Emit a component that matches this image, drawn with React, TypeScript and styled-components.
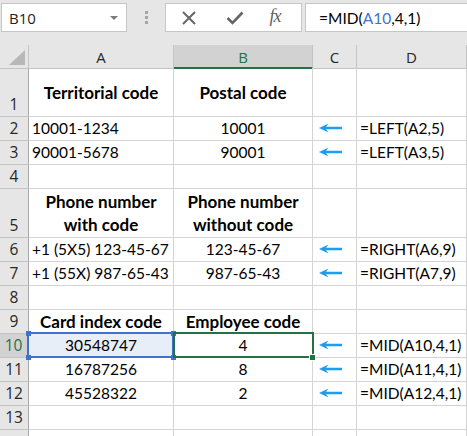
import React from 'react';
import styled, { createGlobalStyle, css } from 'styled-components';

const GlobalStyle = createGlobalStyle`
  html, body {
    margin: 0;
    padding: 0;
    background: #ffffff;
  }
  body {
    font-family: Lato, 'Open Sans', sans-serif;
    overflow: hidden;
  }
`;

const GREEN = '#217346';
const BLUE = '#3f72d0';
const GRID = '#d4d4d4';
const HEAD_BG = '#e6e6e6';
const HEAD_LINE = '#c3c3c3';

const Page = styled.div`
  width: 467px;
  height: 436px;
  overflow: hidden;
  background: #ffffff;
`;

/* Formula bar */
const Toolbar = styled.div`
  display: flex;
  align-items: flex-start;
  height: 45px;
  padding-top: 3px;
  box-sizing: border-box;
  background: ${HEAD_BG};
`;

const Box = styled.div`
  display: flex;
  align-items: center;
  height: 29px;
  box-sizing: border-box;
  background: #ffffff;
  border: 1px solid #c6c6c6;
`;

const NameBox = styled(Box)`
  width: 126px;
  margin-left: 1px;
  padding: 0 8px 0 7px;
  justify-content: space-between;
  font-family: 'Open Sans', sans-serif;
  font-size: 15px;
  color: #222;
`;

const DropCaret = styled.span`
  width: 0;
  height: 0;
  border-left: 4px solid transparent;
  border-right: 4px solid transparent;
  border-top: 4px solid #7a7a7a;
  margin-top: 1px;
`;

const Grip = styled.div`
  display: flex;
  flex-direction: column;
  gap: 2px;
  width: 3px;
  margin: 8px 17px 0 18px;

  span {
    width: 3px;
    height: 3px;
    background: #a6a6a6;
  }
`;

const ButtonsBox = styled(Box)`
  width: 137px;
  padding: 0 0 0 15px;
`;

const IconSlot = styled.div<{ $w: number }>`
  display: flex;
  align-items: center;
  justify-content: center;
  width: ${(p) => p.$w}px;
  height: 100%;
`;

const Fx = styled.span`
  font-family: 'Liberation Serif', serif;
  font-style: italic;
  font-size: 18px;
  color: #5f5f5f;
  letter-spacing: -1px;
  margin-top: -2px;
`;

const FormulaBox = styled(Box)`
  flex: 1;
  margin-left: 3px;
  border-right: none;
  padding-left: 13px;
  font-size: 15.5px;
  color: #000;
`;

const RefText = styled.span`
  color: ${BLUE};
`;

/* Sheet */
const COLS = '29px 145px 139px 44px 110px';

const Row = styled.div<{ $h: number }>`
  display: grid;
  grid-template-columns: ${COLS};
  height: ${(p) => p.$h}px;
`;

const Corner = styled.div`
  position: relative;
  background: ${HEAD_BG};
  border-right: 1px solid ${HEAD_LINE};
  border-bottom: 1px solid ${HEAD_LINE};
  box-sizing: border-box;

  &::after {
    content: '';
    position: absolute;
    right: 3px;
    bottom: 3px;
    width: 0;
    height: 0;
    border-left: 16px solid transparent;
    border-bottom: 15px solid #b8b8b8;
  }
`;

const ColHead = styled.div<{ $active?: boolean }>`
  display: flex;
  align-items: center;
  justify-content: center;
  box-sizing: border-box;
  font-family: 'Open Sans', sans-serif;
  font-size: 15px;
  color: #262626;
  background: ${HEAD_BG};
  border-right: 1px solid ${HEAD_LINE};
  border-bottom: 1px solid ${HEAD_LINE};
  padding-top: 1px;

  ${(p) =>
    p.$active &&
    css`
      background: #d2d2d2;
      color: ${GREEN};
      border-bottom: 2px solid ${GREEN};
      padding-top: 2px;
    `}
`;

const RowHead = styled.div<{ $active?: boolean; $tall?: boolean }>`
  display: flex;
  justify-content: center;
  align-items: ${(p) => (p.$tall ? 'flex-end' : 'center')};
  box-sizing: border-box;
  font-family: 'Open Sans', sans-serif;
  font-size: 15.5px;
  line-height: 23px;
  color: #262626;
  background: ${HEAD_BG};
  border-right: 1px solid #a9a9a9;
  border-bottom: 1px solid ${HEAD_LINE};

  ${(p) =>
    p.$active &&
    css`
      background: #d2d2d2;
      color: ${GREEN};
      border-right: 2px solid ${GREEN};
    `}
`;

type Align = 'left' | 'center';

const Cell = styled.div<{ $align?: Align; $bold?: boolean }>`
  position: relative;
  display: flex;
  flex-direction: column;
  justify-content: center;
  align-items: ${(p) => (p.$align === 'center' ? 'center' : 'flex-start')};
  text-align: ${(p) => p.$align ?? 'left'};
  box-sizing: border-box;
  padding: 0 3px;
  font-size: ${(p) => (p.$bold ? '17px' : '15.5px')};
  line-height: 23px;
  font-weight: ${(p) => (p.$bold ? 700 : 400)};
  color: #000;
  white-space: nowrap;
  border-right: 1px solid ${GRID};
  border-bottom: 1px solid ${GRID};
`;

const RefCell = styled(Cell)`
  background: #e8eef8;

  &::after {
    content: '';
    position: absolute;
    top: -2px;
    left: -2px;
    right: -1px;
    bottom: -1px;
    border: 2px solid ${BLUE};
    pointer-events: none;
  }
`;

const Handle = styled.span<{ $top?: boolean; $left?: boolean }>`
  position: absolute;
  width: 5px;
  height: 5px;
  background: ${BLUE};
  z-index: 2;
  ${(p) => (p.$top ? 'top: -3px;' : 'bottom: -3px;')}
  ${(p) => (p.$left ? 'left: -3px;' : 'right: -3px;')}
`;

const ActiveCell = styled(Cell)`
  &::after {
    content: '';
    position: absolute;
    top: -2px;
    left: -1px;
    right: -2px;
    bottom: -1px;
    border: 2px solid ${GREEN};
    z-index: 3;
    pointer-events: none;
  }
`;

const FillHandle = styled.span`
  position: absolute;
  right: -4px;
  bottom: -4px;
  width: 5px;
  height: 5px;
  background: ${GREEN};
  border: 1px solid #ffffff;
  z-index: 4;
`;

const ArrowCell = styled(Cell)`
  align-items: flex-start;
  padding: 0 0 1px 6px;
`;

const Arrow = () => (
  <svg width="24" height="10" viewBox="0 0 24 10">
    <path d="M0 5 L9.5 0.6 L7 3.7 L23 3.7 L23 6.3 L7 6.3 L9.5 9.4 Z" fill="#1e9cf0" />
  </svg>
);

type CellData = { t: string; bold?: boolean; align?: Align };
type RowData = {
  n: number;
  h?: number;
  hidden?: boolean;
  a?: CellData;
  b?: CellData;
  f?: string;
};

const rows: RowData[] = [
  { n: 1, h: 49, a: { t: 'Territorial code', bold: true, align: 'center' }, b: { t: 'Postal code', bold: true, align: 'center' } },
  { n: 2, a: { t: '10001-1234' }, b: { t: '10001', align: 'center' }, f: '=LEFT(A2,5)' },
  { n: 3, a: { t: '90001-5678' }, b: { t: '90001', align: 'center' }, f: '=LEFT(A3,5)' },
  { n: 4 },
  { n: 5, h: 49, a: { t: 'Phone number\nwith code', bold: true, align: 'center' }, b: { t: 'Phone number\nwithout code', bold: true, align: 'center' } },
  { n: 6, a: { t: '+1 (5X5) 123-45-67' }, b: { t: '123-45-67', align: 'center' }, f: '=RIGHT(A6,9)' },
  { n: 7, a: { t: '+1 (55X) 987-65-43' }, b: { t: '987-65-43', align: 'center' }, f: '=RIGHT(A7,9)' },
  { n: 8 },
  { n: 9, a: { t: 'Card index code', bold: true, align: 'center' }, b: { t: 'Employee code', bold: true, align: 'center' } },
  { n: 10, a: { t: '30548747', align: 'center' }, b: { t: '4', align: 'center' }, f: '=MID(A10,4,1)' },
  { n: 11, a: { t: '16787256', align: 'center' }, b: { t: '8', align: 'center' }, f: '=MID(A11,4,1)' },
  { n: 12, a: { t: '45528322', align: 'center' }, b: { t: '2', align: 'center' }, f: '=MID(A12,4,1)' },
  { n: 13 },
  { n: 14, hidden: true },
];

const Lines = ({ text }: { text: string }) => (
  <>
    {text.split('\n').map((line) => (
      <span key={line}>{line}</span>
    ))}
  </>
);

const ACTIVE_ROW = 10;

const SheetRow = ({ row }: { row: RowData }) => {
  const active = row.n === ACTIVE_ROW;
  const tall = !!row.h;
  const ACell = active ? RefCell : Cell;
  const BCell = active ? ActiveCell : Cell;

  return (
    <Row $h={row.h ?? 24}>
      <RowHead $active={active} $tall={tall}>
        {!row.hidden && row.n}
      </RowHead>
      <ACell $align={row.a?.align} $bold={row.a?.bold}>
        {row.a && <Lines text={row.a.t} />}
        {active && (
          <>
            <Handle $top $left />
            <Handle $top />
            <Handle $left />
            <Handle />
          </>
        )}
      </ACell>
      <BCell $align={row.b?.align} $bold={row.b?.bold}>
        {row.b && <Lines text={row.b.t} />}
        {active && <FillHandle />}
      </BCell>
      <ArrowCell>{row.f && <Arrow />}</ArrowCell>
      <Cell>{row.f}</Cell>
    </Row>
  );
};

const XIcon = () => (
  <svg width="16" height="16" viewBox="0 0 16 16">
    <path d="M2 2 L14 14 M14 2 L2 14" stroke="#666" strokeWidth="2" />
  </svg>
);

const CheckIcon = () => (
  <svg width="18" height="14" viewBox="0 0 18 14">
    <path d="M1.5 7 L6.5 12 L16.5 1.5" stroke="#666" strokeWidth="2.6" fill="none" />
  </svg>
);

export default function App() {
  return (
    <Page>
      <GlobalStyle />
      <Toolbar>
        <NameBox>
          B10
          <DropCaret />
        </NameBox>
        <Grip>
          <span />
          <span />
          <span />
        </Grip>
        <ButtonsBox>
          <IconSlot $w={16}>
            <XIcon />
          </IconSlot>
          <IconSlot $w={29} />
          <IconSlot $w={18}>
            <CheckIcon />
          </IconSlot>
          <IconSlot $w={22} />
          <IconSlot $w={18}>
            <Fx>fx</Fx>
          </IconSlot>
        </ButtonsBox>
        <FormulaBox>
          =MID(<RefText>A10</RefText>,4,1)
        </FormulaBox>
      </Toolbar>
      <Row $h={23}>
        <Corner />
        <ColHead>A</ColHead>
        <ColHead $active>B</ColHead>
        <ColHead>C</ColHead>
        <ColHead>D</ColHead>
      </Row>
      {rows.map((r) => (
        <SheetRow key={r.n} row={r} />
      ))}
    </Page>
  );
}
